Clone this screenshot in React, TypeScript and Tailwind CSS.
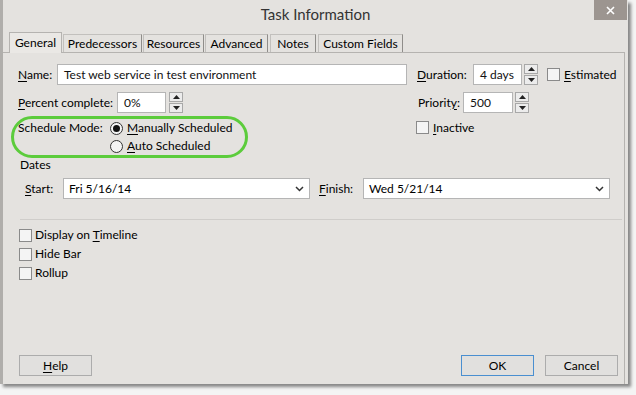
import React from "react";

const U = ({ children }: { children: React.ReactNode }) => <span className="underline underline-offset-2">{children}</span>;

const Spinner = () => (
  <div className="flex flex-col w-[14px] h-[21px] gap-px">
    <div className="flex-1 border border-[#a8a8a8] bg-[#ececec] flex items-center justify-center">
      <svg width="7" height="4" viewBox="0 0 7 4"><path d="M0 4 L3.5 0 L7 4 Z" fill="#222" /></svg>
    </div>
    <div className="flex-1 border border-[#a8a8a8] bg-[#ececec] flex items-center justify-center">
      <svg width="7" height="4" viewBox="0 0 7 4"><path d="M0 0 L3.5 4 L7 0 Z" fill="#222" /></svg>
    </div>
  </div>
);

const Check = () => <div className="w-[13px] h-[13px] border border-[#8a8a8a] bg-[#f4f4f4] shrink-0" />;

const Radio = ({ on }: { on?: boolean }) => (
  <div className="w-[13px] h-[13px] rounded-full border border-[#333] bg-[#f4f4f4] flex items-center justify-center shrink-0">
    {on && <div className="w-[7px] h-[7px] rounded-full bg-[#111]" />}
  </div>
);

const Input = ({ w, value }: { w: string; value: string }) => (
  <div className={`${w} h-[21px] border border-[#b5b5b5] bg-white flex items-center pl-[6px] text-[#111]`}>{value}</div>
);

const Chevron = () => (
  <svg width="9" height="6" viewBox="0 0 9 6" className="mr-[5px]"><path d="M1 1 L4.5 4.5 L8 1" stroke="#333" strokeWidth="1.5" fill="none" /></svg>
);

export default function App() {
  const tabs: [string, string][] = [
    ["Predecessors", "w-[79px]"],
    ["Resources", "w-[61px]"],
    ["Advanced", "w-[63px]"],
    ["Notes", "w-[46px] ml-[2px]"],
    ["Custom Fields", "w-[85px] ml-[2px]"],
  ];
  return (
    <div className="w-[636px] h-[395px] bg-[#f4f4f4] overflow-hidden text-[12px] text-[#000]" style={{ fontFamily: "Lato, 'Noto Sans', sans-serif" }}>
      <div className="relative w-[628px] h-[384px] bg-[#e4e2df] border-l-[3px] border-[#b0aeab] shadow-[3px_3px_3px_rgba(0,0,0,0.45)] flex flex-col">
        {/* title */}
        <div className="h-[31px] flex items-center justify-center text-[15px] text-[#333] pb-[2px]">Task Information</div>
        <div className="absolute top-0 right-[1px] w-[33px] h-[20px] bg-[#9c9590] flex items-center justify-center">
          <svg width="9" height="9" viewBox="0 0 9 9"><path d="M1 1 L8 8 M8 1 L1 8" stroke="white" strokeWidth="1.6" /></svg>
        </div>
        {/* tabs */}
        <div className="flex items-end h-[21px] pl-[6px]">
          <div className="w-[53px] h-[21px] flex items-center justify-center bg-[#eae8e5] border border-b-0 border-[#b5b3b0] relative top-px z-10">General</div>
          {tabs.map(([t, w]) => (
            <div key={t} className={`${w} h-[18px] flex items-center justify-center border border-b-0 border-[#c2c0bd] border-r-[#8f8d8a] ${w.includes("ml-") ? "" : "ml-[1px]"}`}>{t}</div>
          ))}
        </div>
        {/* panel */}
        <div className="relative flex-1 border-t border-r border-[#b5b3b0] mr-[3px] flex flex-col pl-[15px]">
          {/* row 1 */}
          <div className="flex items-center mt-[11px] h-[21px]">
            <div className="w-[39px]"><U>N</U>ame:</div>
            <Input w="w-[350px]" value="Test web service in test environment" />
            <div className="w-[56px] ml-[10px]"><U>D</U>uration:</div>
            <Input w="w-[49px]" value="4 days" />
            <div className="ml-[2px]"><Spinner /></div>
            <div className="ml-[9px]"><Check /></div>
            <div className="ml-[4px]"><U>E</U>stimated</div>
          </div>
          {/* row 2 */}
          <div className="flex items-center mt-[7px] h-[21px]">
            <div className="w-[99px]"><U>P</U>ercent complete:</div>
            <Input w="w-[49px]" value="0%" />
            <div className="ml-[3px]"><Spinner /></div>
            <div className="w-[45px] ml-[235px]">Priorit<U>y</U>:</div>
            <Input w="w-[50px]" value="500" />
            <div className="ml-[2px]"><Spinner /></div>
          </div>
          {/* row 3 schedule */}
          <div className="flex mt-[6px] leading-[18px]">
            <div className="w-[92px]">Schedule Mode:</div>
            <div className="flex flex-col w-[306px]">
              <div className="flex items-center gap-[4px] h-[18px]"><Radio on /><span><U>M</U>anually Scheduled</span></div>
              <div className="flex items-center gap-[4px] h-[18px]"><Radio /><span><U>A</U>uto Scheduled</span></div>
            </div>
            <div className="flex items-start gap-[4px] mt-[2px]"><Check /><span className="leading-[14px]"><U>I</U>nactive</span></div>
          </div>
          {/* green highlight */}
          <div className="absolute left-[8px] top-[63px] w-[237px] h-[42px] border-[3px] border-[#5ccc3c] rounded-[22px]" />
          {/* dates */}
          <div className="mt-[1px] ml-[2px] leading-[18px]">Dates</div>
          <div className="flex items-center mt-[4px] h-[21px] pl-[7px]">
            <div className="w-[38px]"><U>S</U>tart:</div>
            <div className="w-[247px] h-[21px] border border-[#b5b5b5] bg-white flex items-center justify-between pl-[5px]">Fri 5/16/14<Chevron /></div>
            <div className="w-[44px] ml-[9px]"><U>F</U>inish:</div>
            <div className="w-[247px] h-[21px] border border-[#b5b5b5] bg-white flex items-center justify-between pl-[5px]">Wed 5/21/14<Chevron /></div>
          </div>
          <div className="mt-[20px] mr-[2px] ml-[2px] border-t border-[#cfcdca]" />
          {/* checkboxes */}
          <div className="flex flex-col gap-[1px] mt-[6px] pl-[1px] leading-[18px]">
            <div className="flex items-center gap-[3px] h-[18px]"><Check /><span>Display on <U>T</U>imeline</span></div>
            <div className="flex items-center gap-[3px] h-[18px]"><Check /><span>Hide Bar</span></div>
            <div className="flex items-center gap-[3px] h-[18px]"><Check /><span>Rollup</span></div>
          </div>
          <div className="flex-1" />
          {/* buttons */}
          <div className="flex items-center mb-[8px] pr-[6px]">
            <div className="w-[73px] h-[21px] border border-[#acacac] bg-[#e1e0de] flex items-center justify-center ml-[1px]"><U>H</U>elp</div>
            <div className="flex-1" />
            <div className="w-[73px] h-[21px] border border-[#4a8fd0] bg-[#e1e0de] flex items-center justify-center">OK</div>
            <div className="w-[73px] h-[21px] border border-[#acacac] bg-[#e1e0de] flex items-center justify-center ml-[11px]">Cancel</div>
          </div>
        </div>
      </div>
    </div>
  );
}
